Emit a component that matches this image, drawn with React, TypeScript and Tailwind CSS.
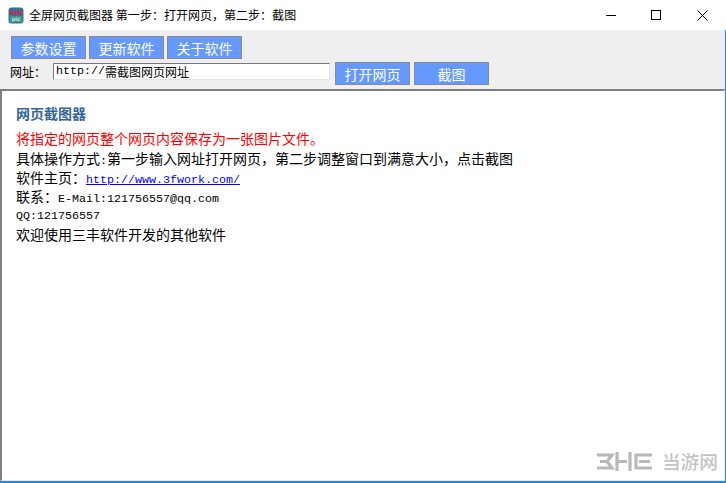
const cjk = "font-['Noto_Sans_CJK_SC','Noto_Sans',sans-serif]";
const latin = "font-['Liberation_Mono','Noto_Sans_CJK_SC',monospace] text-[11.67px]";
const row = "flex h-[19px] items-baseline whitespace-pre leading-[19px]";

function ToolButton({ label, className = "" }: { label: string; className?: string }) {
  return (
    <button
      className={`flex h-[23px] w-[75px] items-center justify-center border border-[#8a8a8a] bg-[#6699ff] text-[14px] leading-none text-white ${className}`}
    >
      {label}
    </button>
  );
}

function AppIcon() {
  return (
    <svg width="16" height="17" viewBox="0 0 16 17" className="shrink-0">
      <rect x="0.5" y="0.5" width="15" height="16" rx="3" fill="#3a6f96" />
      <rect x="2" y="9" width="12" height="6" fill="#3f9a9a" />
      <text x="8" y="8" textAnchor="middle" fontSize="6.5" fontWeight="700" fill="#d8232a" fontFamily="Liberation Sans">
        web
      </text>
      <text x="8" y="14" textAnchor="middle" fontSize="6" fontWeight="700" fill="#c9e8d8" fontFamily="Liberation Sans">
        pic
      </text>
    </svg>
  );
}

function WindowControls() {
  return (
    <div className="ml-auto flex items-center text-black">
      <div className="flex w-[45px] justify-center">
        <svg width="10" height="10" viewBox="0 0 10 10" stroke="currentColor" fill="none">
          <path d="M0 5.5H10" />
        </svg>
      </div>
      <div className="flex w-[46px] justify-center">
        <svg width="10" height="10" viewBox="0 0 10 10" stroke="currentColor" fill="none">
          <rect x="0.5" y="0.5" width="9" height="9" />
        </svg>
      </div>
      <div className="mr-[1px] flex w-[46px] justify-center">
        <svg width="11" height="11" viewBox="0 0 11 11" stroke="currentColor" fill="none">
          <path d="M0.5 0.5L10.5 10.5M10.5 0.5L0.5 10.5" />
        </svg>
      </div>
    </div>
  );
}

function Watermark() {
  return (
    <div className="absolute right-[8px] bottom-[12px] flex items-center gap-[10px]">
      <svg width="55" height="19" viewBox="0 0 55 19" fill="none" stroke="#b9b9b9" strokeWidth="3.2">
        <path d="M0 3H15L10 9.5L15 16H0M3 9.5H10" />
        <path d="M20 0V19M33 0V19M20 9.5H30" />
        <path d="M55 3H39V16H55M42 9.5H53" />
      </svg>
      <span className="text-[18.7px] leading-none font-medium text-[#c4c4c4]">当游网</span>
    </div>
  );
}

export default function App() {
  return (
    <div className={`relative flex h-[483px] w-[726px] flex-col overflow-hidden bg-white ${cjk}`}>
      {/* title bar */}
      <div className="flex h-[30px] shrink-0 items-center bg-white">
        <div className="ml-[8px] flex items-center gap-[5px]">
          <AppIcon />
          <span className="text-[12px] leading-none tracking-[0.02px] text-black">
            全屏网页截图器 第一步：打开网页，第二步：截图
          </span>
        </div>
        <WindowControls />
      </div>

      {/* toolbar */}
      <div className="flex h-[59px] shrink-0 flex-col border-r border-[#2b88d8] bg-[#efefef] pt-[6px] pl-[11px]">
        <div className="flex gap-[3px]">
          <ToolButton label="参数设置" />
          <ToolButton label="更新软件" />
          <ToolButton label="关于软件" />
        </div>
        <div className="mt-[3px] flex items-start">
          <span className="ml-[-1px] w-[43px] text-[12px] leading-[20px] text-black">网址：</span>
          <div className="mt-[1px] flex h-[17px] w-[277px] items-center border border-t-[#777] border-r-[#e3e3e3] border-b-[#e3e3e3] border-l-[#777] bg-white pl-[2px] text-[12px] leading-none text-black">
            <span className={latin}>http://</span>
            <span>需截图网页网址</span>
          </div>
          <ToolButton label="打开网页" className="ml-[5px]" />
          <ToolButton label="截图" className="ml-[4px]" />
        </div>
      </div>

      {/* page view */}
      <div className="flex min-h-0 flex-1 border-r border-[#2b88d8]">
        <div className="min-w-0 flex-1 border-t-2 border-r border-b border-l-2 border-t-[#7f7f7f] border-r-[#eeeeee] border-b-[#e6e6e6] border-l-[#7f7f7f] pt-[12px] pl-[14px]">
          <h1 className="text-[14px] leading-[20px] font-bold text-[#336699]">网页截图器</h1>
          <div className="mt-[6px] text-[14px] text-black">
            <p className={`${row} mb-[1px] text-[#ff0000]`}>将指定的网页整个网页内容保存为一张图片文件。</p>
            <p className={row}>
              具体操作方式<span className={latin}>:</span>第一步输入网址打开网页，第二步调整窗口到满意大小，点击截图
            </p>
            <p className={row}>
              软件主页：
              <a href="#" className={`${latin} text-[#0000ff] underline`}>
                http://www.3fwork.com/
              </a>
            </p>
            <p className={row}>
              联系：<span className={latin}>E-Mail:121756557@qq.com</span>
            </p>
            <p className={`${row} ${latin} pt-[1px]`}>QQ:121756557</p>
            <p className={row}>欢迎使用三丰软件开发的其他软件</p>
          </div>
        </div>
      </div>

      <div className="h-[2px] shrink-0 bg-[#2b88d8]" />
      <Watermark />
    </div>
  );
}
